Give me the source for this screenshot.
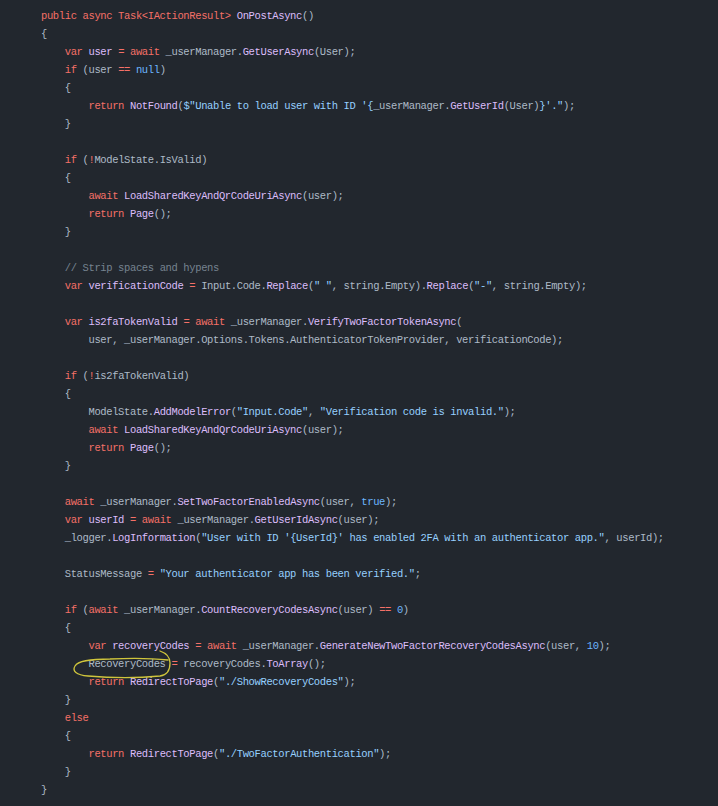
import React from "react";

type Tok = [string, string];

const C: Record<string, string> = {
  K: "text-[#f47067]",
  F: "text-[#dcbdfb]",
  T: "text-[#adbac7]",
  S: "text-[#96d0ff]",
  N: "text-[#6cb6ff]",
  M: "text-[#768390]",
};

const I1 = "    ";
const I2 = "        ";

const lines: Tok[][] = [
  [["K", "public async Task<IActionResult> "], ["F", "OnPostAsync"], ["T", "()"]],
  [["T", "{"]],
  [["T", I1], ["K", "var "], ["F", "user "], ["K", "= await "], ["T", "_userManager."], ["F", "GetUserAsync"], ["T", "(User);"]],
  [["T", I1], ["K", "if "], ["T", "(user "], ["K", "== "], ["N", "null"], ["T", ")"]],
  [["T", I1 + "{"]],
  [["T", I2], ["K", "return "], ["F", "NotFound"], ["T", "("], ["S", "$\"Unable to load user with ID '{"], ["T", "_userManager."], ["F", "GetUserId"], ["T", "(User)"], ["S", "}'.\""], ["T", ");"]],
  [["T", I1 + "}"]],
  [],
  [["T", I1], ["K", "if "], ["T", "("], ["K", "!"], ["T", "ModelState.IsValid)"]],
  [["T", I1 + "{"]],
  [["T", I2], ["K", "await "], ["F", "LoadSharedKeyAndQrCodeUriAsync"], ["T", "(user);"]],
  [["T", I2], ["K", "return "], ["F", "Page"], ["T", "();"]],
  [["T", I1 + "}"]],
  [],
  [["T", I1], ["M", "// Strip spaces and hypens"]],
  [["T", I1], ["K", "var "], ["F", "verificationCode "], ["K", "= "], ["T", "Input.Code."], ["F", "Replace"], ["T", "("], ["S", "\" \""], ["T", ", string.Empty)."], ["F", "Replace"], ["T", "("], ["S", "\"-\""], ["T", ", string.Empty);"]],
  [],
  [["T", I1], ["K", "var "], ["F", "is2faTokenValid "], ["K", "= await "], ["T", "_userManager."], ["F", "VerifyTwoFactorTokenAsync"], ["T", "("]],
  [["T", I2 + "user, _userManager.Options.Tokens.AuthenticatorTokenProvider, verificationCode);"]],
  [],
  [["T", I1], ["K", "if "], ["T", "("], ["K", "!"], ["T", "is2faTokenValid)"]],
  [["T", I1 + "{"]],
  [["T", I2 + "ModelState."], ["F", "AddModelError"], ["T", "("], ["S", "\"Input.Code\""], ["T", ", "], ["S", "\"Verification code is invalid.\""], ["T", ");"]],
  [["T", I2], ["K", "await "], ["F", "LoadSharedKeyAndQrCodeUriAsync"], ["T", "(user);"]],
  [["T", I2], ["K", "return "], ["F", "Page"], ["T", "();"]],
  [["T", I1 + "}"]],
  [],
  [["T", I1], ["K", "await "], ["T", "_userManager."], ["F", "SetTwoFactorEnabledAsync"], ["T", "(user, "], ["N", "true"], ["T", ");"]],
  [["T", I1], ["K", "var "], ["F", "userId "], ["K", "= await "], ["T", "_userManager."], ["F", "GetUserIdAsync"], ["T", "(user);"]],
  [["T", I1 + "_logger."], ["F", "LogInformation"], ["T", "("], ["S", "\"User with ID '{UserId}' has enabled 2FA with an authenticator app.\""], ["T", ", userId);"]],
  [],
  [["T", I1 + "StatusMessage "], ["K", "= "], ["S", "\"Your authenticator app has been verified.\""], ["T", ";"]],
  [],
  [["T", I1], ["K", "if "], ["T", "("], ["K", "await "], ["T", "_userManager."], ["F", "CountRecoveryCodesAsync"], ["T", "(user) "], ["K", "== "], ["N", "0"], ["T", ")"]],
  [["T", I1 + "{"]],
  [["T", I2], ["K", "var "], ["F", "recoveryCodes "], ["K", "= await "], ["T", "_userManager."], ["F", "GenerateNewTwoFactorRecoveryCodesAsync"], ["T", "(user, "], ["N", "10"], ["T", ");"]],
  [["T", I2 + "RecoveryCodes "], ["K", "= "], ["T", "recoveryCodes."], ["F", "ToArray"], ["T", "();"]],
  [["T", I2], ["K", "return "], ["F", "RedirectToPage"], ["T", "("], ["S", "\"./ShowRecoveryCodes\""], ["T", ");"]],
  [["T", I1 + "}"]],
  [["T", I1], ["K", "else"]],
  [["T", I1 + "{"]],
  [["T", I2], ["K", "return "], ["F", "RedirectToPage"], ["T", "("], ["S", "\"./TwoFactorAuthentication\""], ["T", ");"]],
  [["T", I1 + "}"]],
  [["T", "}"]],
];

export default function App() {
  return (
    <div className="w-[718px] h-[806px] bg-[#22272e] overflow-hidden relative">
      <div
        className="pt-[7px] pl-[41px] text-[10.5px] tracking-[-0.37px] whitespace-pre"
        style={{ fontFamily: '"Liberation Mono", "DejaVu Sans Mono", monospace' }}
      >
        {lines.map((l, i) => (
          <div key={i} className="h-[18px] leading-[18px]">
            {l.map(([k, t], j) => (
              <span key={j} className={C[k]}>
                {t}
              </span>
            ))}
          </div>
        ))}
      </div>
      <svg
        className="absolute left-0 top-0 pointer-events-none"
        width="718"
        height="806"
        viewBox="0 0 718 806"
      >
        <path
          d="M160 651 C 166 653, 170 657, 170 663 C 170 670, 168 675, 160 676 C 140 678, 110 678, 88 676 C 76 675, 72 671, 75 666 C 78 661, 92 659, 110 659 C 130 658, 150 658, 168 660"
          fill="none"
          stroke="#cfc53c"
          strokeWidth="1.3"
          strokeLinecap="round"
        />
      </svg>
    </div>
  );
}
